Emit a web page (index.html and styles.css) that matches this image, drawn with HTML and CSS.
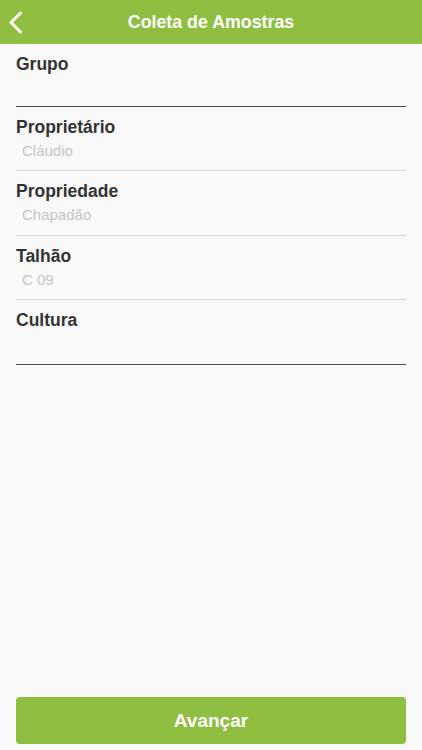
FILE: index.html
```html
<!DOCTYPE html>
<html lang="pt-BR">
<head>
  <meta charset="UTF-8" />
  <meta name="viewport" content="width=device-width, initial-scale=1.0" />
  <title>Coleta de Amostras</title>
  <link rel="stylesheet" href="styles.css">
</head>
<body>
  <header class="topbar">
    <button class="back" aria-label="Voltar">
      <svg width="15" height="23" viewBox="0 0 15 23"><path d="M12.5 2 L3 11.5 L12.5 21" fill="none" stroke="#fff" stroke-width="3" stroke-linecap="round" stroke-linejoin="round"/></svg>
    </button>
    <h1>Coleta de Amostras</h1>
  </header>

  <main class="form">
    <div class="field active">
      <label>Grupo</label>
      <div class="value"></div>
    </div>
    <div class="field">
      <label>Proprietário</label>
      <div class="value">Cláudio</div>
    </div>
    <div class="field">
      <label>Propriedade</label>
      <div class="value">Chapadão</div>
    </div>
    <div class="field">
      <label>Talhão</label>
      <div class="value">C 09</div>
    </div>
    <div class="field active">
      <label>Cultura</label>
      <div class="value"></div>
    </div>
  </main>

  <button class="next">Avançar</button>
</body>
</html>
```

FILE: styles.css
```css
*, *::before, *::after { box-sizing: border-box; }
html, body { height: 100%; }
body { margin: 0; display: flex; flex-direction: column; background: #f9f9f9; font-family: 'Liberation Sans', Arial, sans-serif; color: #333; }

/* Top bar */
.topbar { height: 44px; flex: none; display: flex; align-items: center; justify-content: center; position: relative; background: #8fbe40; }
.topbar h1 { margin: 0; font-size: 17.8px; font-weight: bold; color: #fff; }
.back { position: absolute; left: 8px; top: 11px; padding: 0; border: none; background: none; cursor: pointer; line-height: 0; }

/* Form */
.form { flex: 1; display: flex; flex-direction: column; padding: 0 16px; }
.field { padding: 10px 0 8.4px; border-bottom: 1px solid #d8d8d8; }
.field:first-child { padding-bottom: 7px; }
.field.active { border-bottom: 1.5px solid #4a4a4a; }
.field label { display: block; font-size: 17.5px; line-height: 21px; font-weight: bold; color: #333; }
.field .value { margin-top: 2px; padding-left: 6px; height: 22px; font-size: 15px; line-height: 22px; color: #c6c6c6; }

/* Next button */
.next { flex: none; height: 47px; margin: 0 16px 6px; border: none; border-radius: 4px; background: #8fbe40; color: #fff; font-family: inherit; font-size: 19px; font-weight: bold; cursor: pointer; }
```
